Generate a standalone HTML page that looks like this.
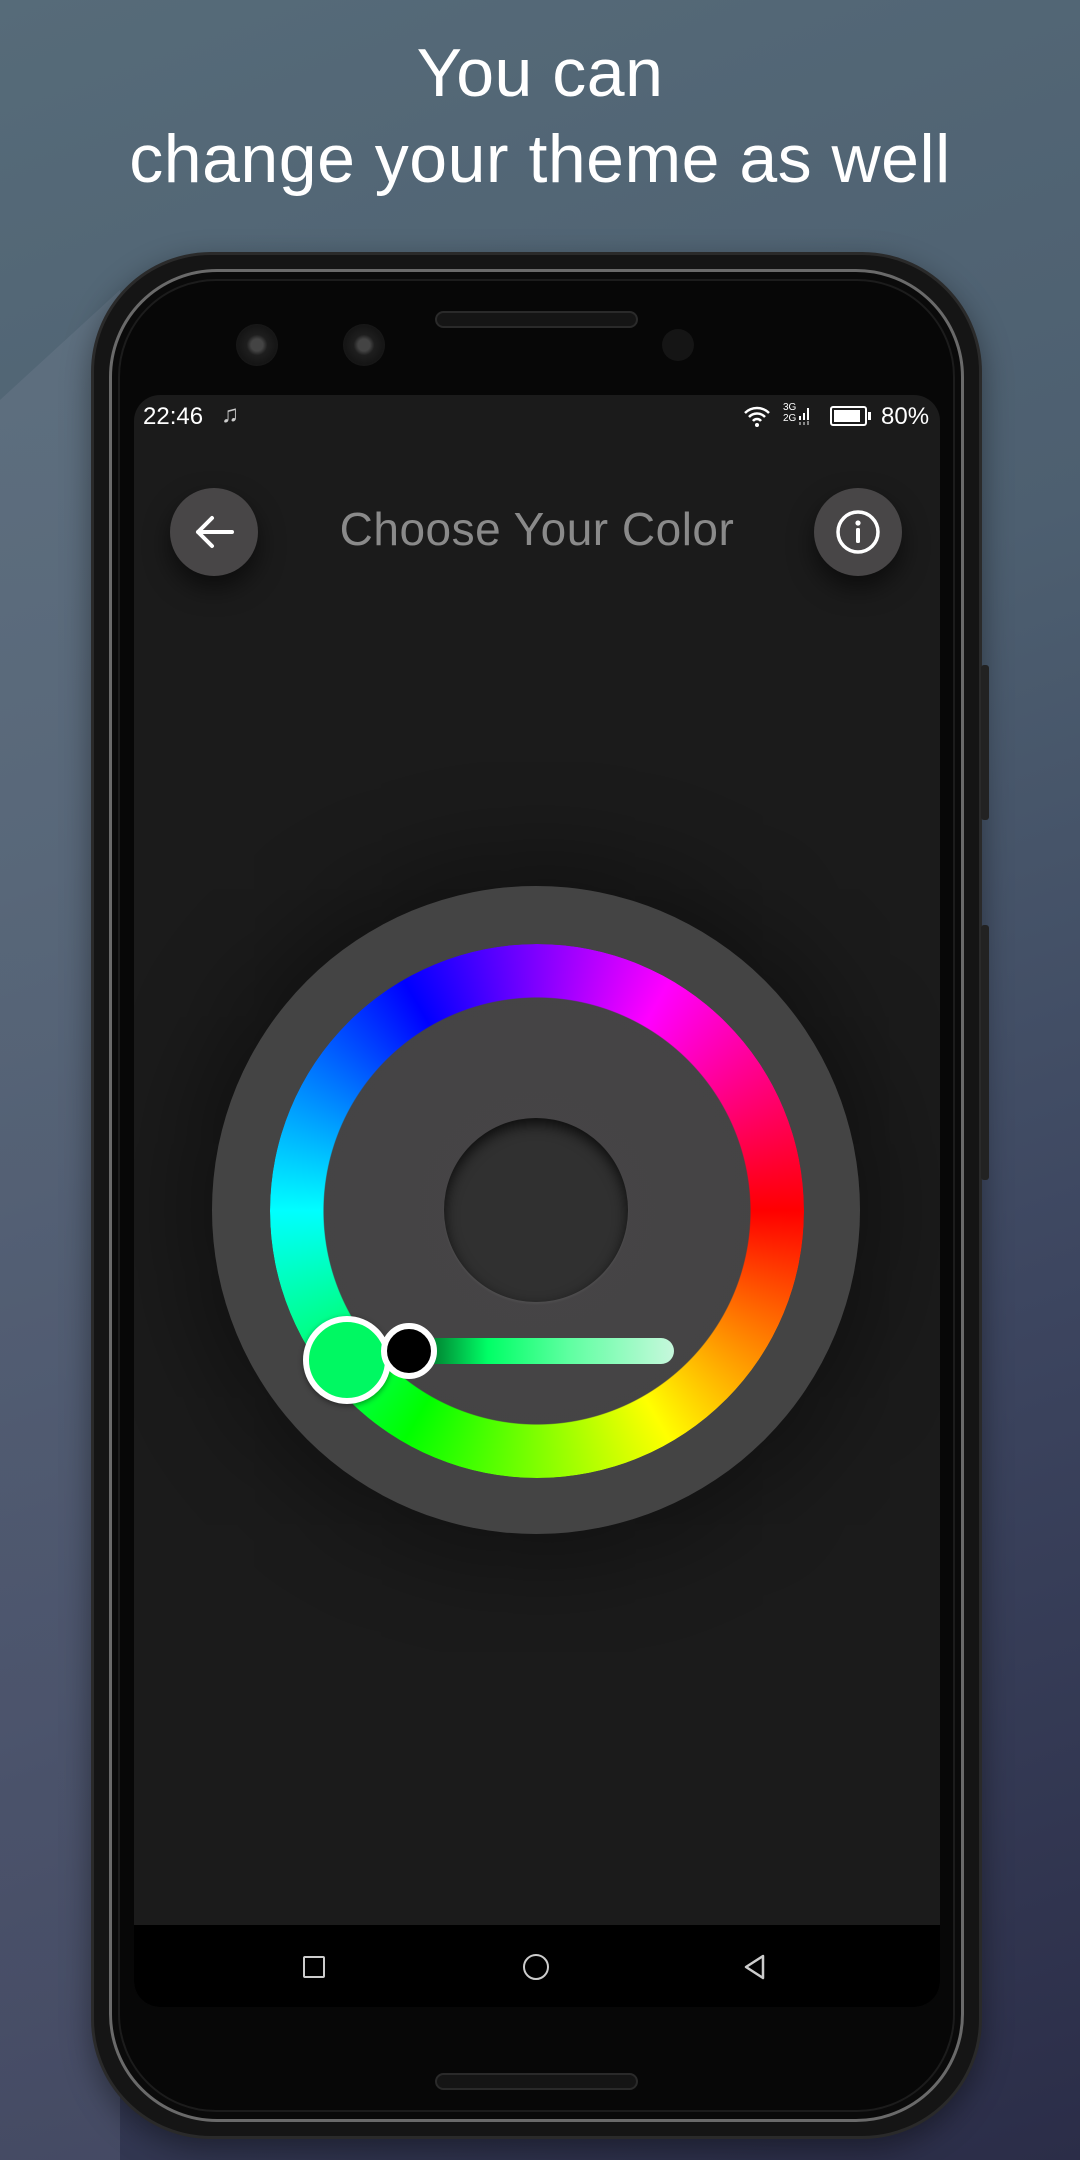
<!DOCTYPE html>
<html><head><meta charset="utf-8"><style>
*{margin:0;padding:0;box-sizing:border-box}
body{width:1080px;height:2160px;overflow:hidden;position:relative;font-family:"Liberation Sans",sans-serif;
background:linear-gradient(160deg,#566b79 0%,#4d5f70 35%,#3d4660 65%,#2b2d48 100%)}
.band{position:absolute;left:0;top:0;width:1080px;height:2160px;background:linear-gradient(180deg,#6a7b8a,#545a72);opacity:.55;clip-path:polygon(0 400px,120px 290px,120px 2160px,0 2160px)}
.h{position:absolute;left:0;width:1080px;text-align:center;color:#fff;font-size:68px;font-weight:300;letter-spacing:0.5px}
.phone{position:absolute;left:91px;top:252px;width:891px;height:1887px;border-radius:120px;background:#151515;border:3px solid #2a2a2a;box-shadow:0 10px 30px rgba(0,0,0,.4)}
.rim{position:absolute;left:15px;top:14px;right:15px;bottom:14px;border-radius:108px;border:3px solid #6a6a6a;background:#0a0a0a}
.rim2{position:absolute;left:24px;top:24px;right:24px;bottom:24px;border-radius:98px;background:#070707;border:2px solid #1c1c1c}
.btn{position:absolute;right:-10px;width:8px;background:#222;border-radius:3px}
.screen{position:absolute;left:134px;top:395px;width:806px;height:1612px;background:#1b1b1b;border-radius:26px;overflow:hidden}
.cam{position:absolute;border-radius:50%;background:radial-gradient(circle,#444 0 20%,#1e1e1e 35%,#151515 65%,#2a2a2a 100%)}
.st{position:absolute;top:0;left:0;width:806px;height:40px;color:#fff;font-size:24px}
.cb{position:absolute;width:88px;height:88px;border-radius:50%;background:#484647;box-shadow:0 12px 25px rgba(0,0,0,.55)}
.title{position:absolute;top:107px;left:0;width:806px;text-align:center;color:#8a8a8a;font-size:46px;letter-spacing:.5px}
.nav{position:absolute;left:0;bottom:0;width:806px;height:82px;background:#000}
</style></head><body>
<div class="band"></div>
<div class="h" style="top:34px">You can</div>
<div class="h" style="top:120px">change your theme as well</div>
<div class="phone">
 <div class="rim"></div><div class="rim2"></div>
 <div class="btn" style="top:410px;height:155px"></div>
 <div class="btn" style="top:670px;height:255px"></div>
</div>
<div class="cam" style="left:236px;top:324px;width:42px;height:42px"></div>
<div class="cam" style="left:343px;top:324px;width:42px;height:42px"></div>
<div style="position:absolute;left:435px;top:311px;width:203px;height:17px;border-radius:9px;background:#151515;border:2px solid #2a2a2a"></div>
<div style="position:absolute;left:662px;top:329px;width:32px;height:32px;border-radius:50%;background:#151515"></div>
<div style="position:absolute;left:435px;top:2073px;width:203px;height:17px;border-radius:9px;background:#151515;border:2px solid #2a2a2a"></div>
<div class="screen">
 <div class="st">
  <span style="position:absolute;left:9px;top:8px">22:46</span>
  <span style="position:absolute;left:87px;top:6px;color:#ccc;font-size:24px">♫</span>
  <svg style="position:absolute;left:608px;top:10px" width="30" height="22" viewBox="0 0 30 22"><path d="M3 8a17 17 0 0 1 24 0M7 12a11 11 0 0 1 16 0M11 16a5 5 0 0 1 8 0" stroke="#fff" stroke-width="2.5" fill="none"/><circle cx="15" cy="20" r="2" fill="#fff"/></svg>
  <span style="position:absolute;left:649px;top:7px;font-size:10px;line-height:11px;color:#fff">3G<br>2G</span>
  <svg style="position:absolute;left:664px;top:9px" width="14" height="22"><rect x="1" y="12" width="2" height="4" fill="#fff"/><rect x="5" y="9" width="2" height="7" fill="#fff"/><rect x="9" y="4" width="2" height="12" fill="#fff"/><rect x="1" y="18" width="2" height="3" fill="#888"/><rect x="5" y="18" width="2" height="3" fill="#888"/><rect x="9" y="17" width="2" height="4" fill="#888"/></svg>
  <div style="position:absolute;left:696px;top:11px;width:37px;height:20px;border:2px solid #fff;border-radius:3px"><div style="margin:2px;width:26px;height:12px;background:#fff"></div></div>
  <div style="position:absolute;left:734px;top:17px;width:3px;height:8px;background:#fff"></div>
  <span style="position:absolute;left:747px;top:8px">80%</span>
 </div>
 <div class="cb" style="left:36px;top:93px"><svg width="88" height="88" viewBox="0 0 88 88"><path d="M62 44H28M42 30L28 44L42 58" stroke="#fff" stroke-width="4" fill="none" stroke-linecap="round" stroke-linejoin="round"/></svg></div>
 <div class="title">Choose Your Color</div>
 <div class="cb" style="left:680px;top:93px"><svg width="88" height="88" viewBox="0 0 88 88"><circle cx="44" cy="44" r="20" stroke="#fff" stroke-width="3.5" fill="none"/><circle cx="44" cy="35" r="2.6" fill="#fff"/><rect x="42" y="40" width="4" height="15" rx="1.5" fill="#fff"/></svg></div>
 <div style="position:absolute;left:78px;top:491px;width:648px;height:648px;border-radius:50%;background:radial-gradient(circle,#464446 0%,#444 70%,#3d3d3d 100%);box-shadow:0 0 90px 30px rgba(0,0,0,.35)"></div>
 <div style="position:absolute;left:136px;top:549px;width:534px;height:534px;border-radius:50%;background:conic-gradient(from 90deg,#f00,#ff0,#0f0,#0ff,#00f,#f0f,#f00);-webkit-mask:radial-gradient(circle,transparent 213px,#000 214px);mask:radial-gradient(circle,transparent 213px,#000 214px)"></div>
 <div style="position:absolute;left:310px;top:723px;width:184px;height:184px;border-radius:50%;background:#303030;box-shadow:inset 0 6px 14px rgba(0,0,0,.75),0 2px 2px rgba(255,255,255,.05)"></div>
 <div style="position:absolute;left:274px;top:943px;width:266px;height:26px;border-radius:13px;background:linear-gradient(90deg,#004d1a 0%,#00ff66 30%,#5dffa0 60%,#c6f8dc 100%)"></div>
 <div style="position:absolute;left:169px;top:921px;width:88px;height:88px;border-radius:50%;background:#00f862;border:6px solid #fff;box-shadow:0 2px 6px rgba(0,0,0,.4)"></div>
 <div style="position:absolute;left:247px;top:928px;width:56px;height:56px;border-radius:50%;background:#000;border:6px solid #fff"></div>
 <div class="nav">
  <div style="position:absolute;left:169px;top:31px;width:22px;height:22px;border:2.5px solid #ccc;border-radius:2px"></div>
  <div style="position:absolute;left:389px;top:29px;width:26px;height:26px;border:2.5px solid #ccc;border-radius:50%"></div>
  <svg style="position:absolute;left:607px;top:28px" width="28" height="28"><path d="M22 3L5 14L22 25Z" stroke="#ccc" stroke-width="2.5" fill="none" stroke-linejoin="round"/></svg>
 </div>
</div>
</body></html>
